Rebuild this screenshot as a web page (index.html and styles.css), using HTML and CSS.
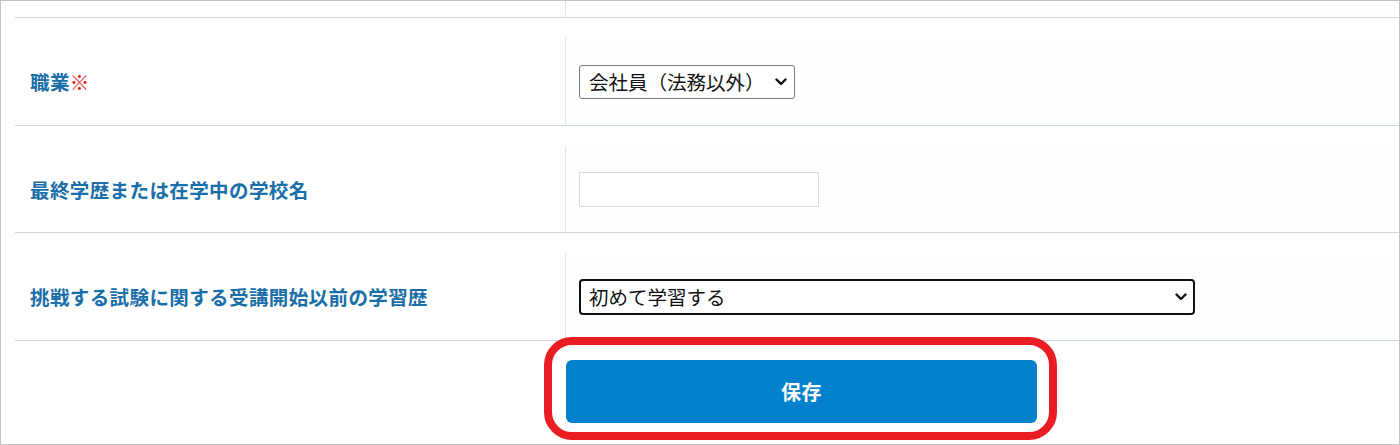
FILE: index.html
```html
<!DOCTYPE html>
<html lang="ja">
<head>
<meta charset="utf-8">
<title>プロフィール編集</title>
<link rel="stylesheet" href="styles.css">
</head>
<body>
<div class="frame">
  <div class="prev-row">
    <div class="label-cell"></div>
    <div class="value-cell"></div>
  </div>
  <div class="row">
    <div class="label-cell"><span class="label">職業<span class="req">※</span></span></div>
    <div class="value-cell">
      <div class="select-wrap w-job">
        <select class="select">
          <option>会社員（法務以外）</option>
        </select>
        <svg class="chev" viewBox="0 0 12 8" width="12" height="8"><path d="M1.5 1.5 L6 6 L10.5 1.5" fill="none" stroke="#111" stroke-width="2.4" stroke-linecap="round" stroke-linejoin="round"/></svg>
      </div>
    </div>
  </div>
  <div class="row row-short">
    <div class="label-cell"><span class="label">最終学歴または在学中の学校名</span></div>
    <div class="value-cell">
      <input class="text-input" type="text">
    </div>
  </div>
  <div class="row">
    <div class="label-cell"><span class="label">挑戦する試験に関する受講開始以前の学習歴</span></div>
    <div class="value-cell">
      <div class="select-wrap w-history">
        <select class="select focused">
          <option>初めて学習する</option>
        </select>
        <svg class="chev" viewBox="0 0 12 8" width="12" height="8"><path d="M1.5 1.5 L6 6 L10.5 1.5" fill="none" stroke="#111" stroke-width="2.4" stroke-linecap="round" stroke-linejoin="round"/></svg>
      </div>
    </div>
  </div>
  <div class="button-row">
    <div class="label-cell"></div>
    <div class="button-cell">
      <div class="button-wrap">
        <button class="save-btn" type="button">保存</button>
        <div class="highlight"></div>
      </div>
    </div>
  </div>
</div>
</body>
</html>
```

FILE: styles.css
```css
* { box-sizing: border-box; }

html, body {
  margin: 0;
  padding: 0;
  background: #ffffff;
}

body {
  font-family: "Noto Sans CJK JP", "Noto Sans", sans-serif;
}

.frame {
  width: 1400px;
  height: 445px;
  border: 1px solid #c3c3c3;
  padding-left: 14px;
  overflow: hidden;
  display: flex;
  flex-direction: column;
}

.prev-row {
  display: grid;
  grid-template-columns: 550px 1fr;
  height: 16px;
  flex: none;
}

.prev-row .value-cell {
  border-left: 1px solid #dfe5ea;
}

.row {
  display: grid;
  grid-template-columns: 550px 1fr;
  border-top: 1px solid #cdd8df;
  padding-top: 20px;
  height: 108px;
  flex: none;
}

.row-short {
  height: 107px;
}

.label-cell {
  display: flex;
  align-items: center;
  padding-left: 15px;
}

.label {
  color: #1a6ea9;
  font-weight: 700;
  font-size: 19.5px;
  letter-spacing: 0.4px;
}

.req {
  color: #e4141b;
  font-weight: 700;
}

.value-cell {
  border-left: 1px solid #dfe5ea;
  display: flex;
  align-items: center;
  padding-left: 13px;
  background: #fdfefe;
}

.select-wrap {
  position: relative;
  display: flex;
}

.w-job { width: 216px; }
.w-history { width: 616px; }

.select {
  appearance: none;
  -webkit-appearance: none;
  width: 100%;
  height: 34px;
  border: 1px solid #7a7a7a;
  border-radius: 3px;
  background: #ffffff;
  color: #111111;
  font-family: "Noto Sans CJK JP", "Noto Sans", sans-serif;
  font-size: 19.5px;
  padding: 0 30px 0 9px;
  line-height: 32px;
}

.select.focused {
  height: 36px;
  border: 2px solid #101010;
  border-radius: 4px;
  padding-left: 8px;
}

.chev {
  position: absolute;
  right: 8px;
  top: 50%;
  margin-top: -4px;
}

.text-input {
  width: 240px;
  height: 35px;
  border: 1px solid #dcdcdc;
  border-radius: 0;
  background: #ffffff;
  font-size: 18px;
}

.button-row {
  display: grid;
  grid-template-columns: 550px 1fr;
  border-top: 1px solid #cdd8df;
  flex: 1;
}

.button-cell {
  padding-top: 19px;
  padding-left: 1px;
}

.button-wrap {
  position: relative;
  width: 471px;
}

.save-btn {
  display: block;
  width: 471px;
  height: 63px;
  border: none;
  border-radius: 6px;
  background: #0381cc;
  color: #ffffff;
  font-family: "Noto Sans CJK JP", "Noto Sans", sans-serif;
  font-weight: 700;
  font-size: 20px;
  letter-spacing: 0.5px;
  padding: 0;
}

.highlight {
  position: absolute;
  left: -22px;
  top: -23px;
  width: 513px;
  height: 103px;
  border: 8px solid #ea1c24;
  border-radius: 28px;
  pointer-events: none;
}
```
